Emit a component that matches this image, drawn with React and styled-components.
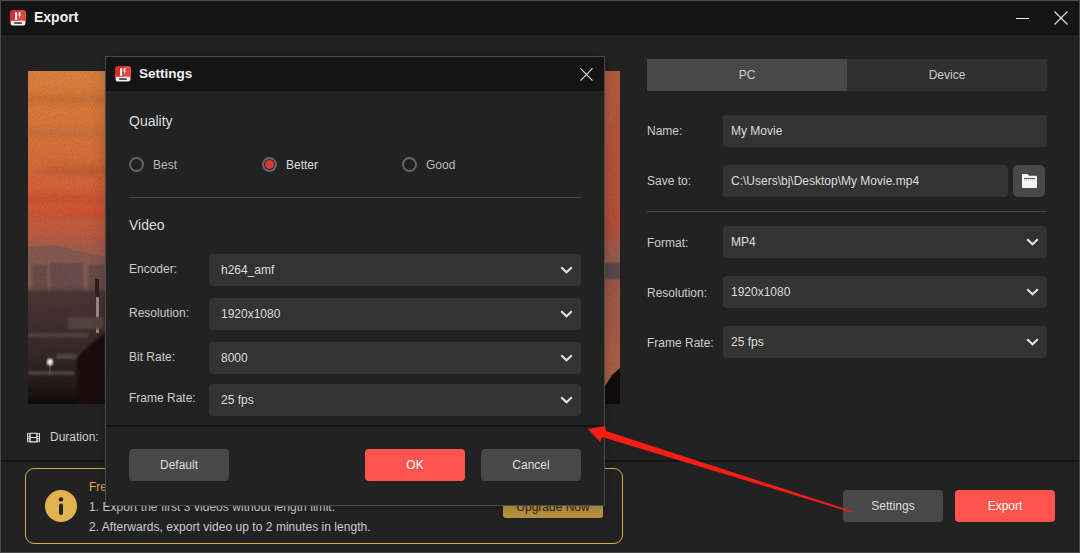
import styled, { createGlobalStyle } from "styled-components";
import { FaFilm } from "react-icons/fa";

const GlobalStyle = createGlobalStyle`
  html, body {
    margin: 0;
    padding: 0;
    background: #222;
  }
  * {
    box-sizing: border-box;
  }
`;

const Logo = () => (
  <LogoSvg viewBox="0 0 16 16">
    <rect x="0" y="0" width="16" height="15" rx="3" fill="#d42f28" />
    <path d="M10 0h3c1.700 0 3 1.300 3 3v8H8z" fill="#e2554a" opacity="0.7" />
    <path d="M5 2.200h2.200v7.600H5z" fill="#fff" />
    <path d="M8.600 2.600l2.300-.8-1 3 .9.300-1.700 3.400.3-2.800-.9-.2z" fill="#fff" />
    <rect x="0.800" y="10.800" width="14.400" height="4.600" rx="1.300" fill="#f4eeee" />
    <rect x="4.200" y="12.200" width="7.600" height="1.700" fill="#4a4444" />
  </LogoSvg>
);

const Chevron = () => (
  <ChevronSvg viewBox="0 0 13 8">
    <path d="M1.200 1.200 6.500 6.300l5.300-5.100" fill="none" stroke="#e4e4e4" strokeWidth="2" />
  </ChevronSvg>
);

const CloseIcon = ({ size }) => (
  <svg width={size} height={size} viewBox="0 0 14 14">
    <path d="M.5.5l13 13M13.500.5l-13 13" stroke="#e6e6e6" strokeWidth="1.100" fill="none" />
  </svg>
);

const FolderIcon = () => (
  <svg width="15" height="14" viewBox="0 0 15 14">
    <path d="M0 1C0 .4.400 0 1 0h4.400L7 1.800h7c.6 0 1 .4 1 1V13c0 .6-.4 1-1 1H1c-.6 0-1-.4-1-1z" fill="#f4f4f4" />
    <path d="M2 4.500h11" stroke="#555" strokeWidth="1" />
    <path d="M2 6h11" stroke="#aaa" strokeWidth="0.800" strokeDasharray="1 1" />
  </svg>
);

const SunsetPicture = () => (
  <PictureSvg viewBox="0 0 592 333" preserveAspectRatio="none">
    <defs>
      <linearGradient id="sky" x1="0" y1="0" x2="0" y2="1">
        <stop offset="0" stopColor="#dc8240" />
        <stop offset="0.2" stopColor="#d9753a" />
        <stop offset="0.38" stopColor="#d6603a" />
        <stop offset="0.48" stopColor="#bb5f48" />
        <stop offset="0.6" stopColor="#8f5c50" />
        <stop offset="1" stopColor="#5b4440" />
      </linearGradient>
      <linearGradient id="ground" x1="0" y1="0" x2="0" y2="1">
        <stop offset="0" stopColor="#6b4e4c" stopOpacity="0" />
        <stop offset="0.06" stopColor="#4c3634" />
        <stop offset="0.55" stopColor="#372a29" />
        <stop offset="0.82" stopColor="#261c1b" />
        <stop offset="1" stopColor="#110c0b" />
      </linearGradient>
      <linearGradient id="edgeStrip" x1="0" y1="0" x2="0" y2="1">
        <stop offset="0" stopColor="#b5603f" />
        <stop offset="0.45" stopColor="#bb503a" />
        <stop offset="0.57" stopColor="#966050" />
        <stop offset="0.58" stopColor="#5e4a4a" />
        <stop offset="0.62" stopColor="#5e4a4a" />
        <stop offset="0.63" stopColor="#a05a48" />
        <stop offset="1" stopColor="#b46446" />
      </linearGradient>
      <filter id="blur3"><feGaussianBlur stdDeviation="3" /></filter>
      <filter id="blur1"><feGaussianBlur stdDeviation="0.800" /></filter>
      <filter id="grain">
        <feTurbulence type="fractalNoise" baseFrequency="0.9" numOctaves="2" seed="4" />
        <feColorMatrix values="0 0 0 0 0 0 0 0 0 0 0 0 0 0 0 0 0 0 1.600 -0.600" />
      </filter>
    </defs>
    <rect width="592" height="333" fill="url(#sky)" />
    <g filter="url(#blur3)" opacity="0.65">
      <ellipse cx="40" cy="28" rx="70" ry="5" fill="#c06a38" />
      <ellipse cx="30" cy="62" rx="60" ry="4" fill="#bf6c40" />
      <ellipse cx="60" cy="100" rx="50" ry="5" fill="#b85a34" />
      <ellipse cx="20" cy="128" rx="70" ry="4" fill="#c2482c" />
      <ellipse cx="60" cy="142" rx="60" ry="5" fill="#d84a2c" />
      <ellipse cx="30" cy="160" rx="80" ry="4" fill="#c85a3c" />
    </g>
    <path d="M0 176 28 174 50 180 78 186V240H0z" fill="#875a50" />
    <g fill="#6b4e4c" filter="url(#blur1)">
      <rect x="4" y="194" width="15" height="30" />
      <rect x="22" y="192" width="33" height="32" />
      <rect x="60" y="194" width="17" height="30" />
    </g>
    <rect y="214" width="78" height="119" fill="url(#ground)" />
    <rect x="68" y="226" width="3" height="36" fill="#a08c88" />
    <rect x="67" y="208" width="4" height="18" fill="#2a2224" />
    <g fill="#54443f" filter="url(#blur1)">
      <rect x="40" y="246" width="36" height="12" />
      <rect x="0" y="262" width="60" height="4" />
      <rect x="28" y="283" width="24" height="5" />
      <rect x="0" y="300" width="46" height="4" />
    </g>
    <path d="M49 333V286L62 274 77 262V333z" fill="#1a1110" filter="url(#blur1)" />
    <rect x="21.500" y="291" width="1" height="12" fill="#6e605c" />
    <ellipse cx="22" cy="291" rx="3" ry="3.500" fill="#f4f4f4" filter="url(#blur1)" />
    <rect x="577" width="15" height="333" fill="url(#edgeStrip)" />
    <path d="M577 333V315L584 304 592 297V333z" fill="#130e0d" />
    <rect width="592" height="333" filter="url(#grain)" opacity="0.16" />
  </PictureSvg>
);

const SelectField = ({ value, $wide }) => (
  <Select $wide={$wide}>
    <span>{value}</span>
    <Chevron />
  </Select>
);

export default function App() {
  return (
    <>
      <GlobalStyle />
      <Window>
        <TitleBar>
          <TitleLeft>
            <Logo />
            <WindowTitle>Export</WindowTitle>
          </TitleLeft>
          <WindowControls>
            <MinimizeBar />
            <CloseIcon size={14} />
          </WindowControls>
        </TitleBar>

        <Main>
          <PreviewColumn>
            <SunsetPicture />
            <DurationRow>
              <FaFilm size={13} color="#eee" />
              <span>Duration:</span>
            </DurationRow>
          </PreviewColumn>

          <SidePanel>
            <Tabs>
              <Tab $active>PC</Tab>
              <Tab>Device</Tab>
            </Tabs>
            <FormRow>
              <FieldLabel>Name:</FieldLabel>
              <TextField>My Movie</TextField>
            </FormRow>
            <FormRow>
              <FieldLabel>Save to:</FieldLabel>
              <TextField>C:\Users\bj\Desktop\My Movie.mp4</TextField>
              <FolderButton>
                <FolderIcon />
              </FolderButton>
            </FormRow>
            <PanelDivider />
            <FormRow $first>
              <FieldLabel $low>Format:</FieldLabel>
              <SelectField value="MP4" />
            </FormRow>
            <FormRow>
              <FieldLabel $low>Resolution:</FieldLabel>
              <SelectField value="1920x1080" />
            </FormRow>
            <FormRow>
              <FieldLabel $low>Frame Rate:</FieldLabel>
              <SelectField value="25 fps" />
            </FormRow>
          </SidePanel>
        </Main>

        <Footer>
          <Notice>
            <InfoBadge>
              <svg width="6" height="18" viewBox="0 0 6 18">
                <circle cx="3" cy="2.400" r="2.200" fill="#222" />
                <rect x="1" y="6.500" width="4" height="11.500" rx="2" fill="#222" />
              </svg>
            </InfoBadge>
            <NoticeText>
              <NoticeTitle>Free</NoticeTitle>
              <NoticeLine>1. Export the first 3 videos without length limit.</NoticeLine>
              <NoticeLine>2. Afterwards, export video up to 2 minutes in length.</NoticeLine>
            </NoticeText>
            <UpgradeButton>Upgrade Now</UpgradeButton>
          </Notice>
          <FooterActions>
            <Button>Settings</Button>
            <Button $primary>Export</Button>
          </FooterActions>
        </Footer>

        <Modal>
          <ModalTitleBar>
            <TitleLeft>
              <Logo />
              <ModalTitle>Settings</ModalTitle>
            </TitleLeft>
            <CloseIcon size={13} />
          </ModalTitleBar>
          <ModalBody>
            <SectionHeading>Quality</SectionHeading>
            <RadioRow>
              <RadioItem $width={133}>
                <RadioDot />
                <RadioLabel>Best</RadioLabel>
              </RadioItem>
              <RadioItem $width={140}>
                <RadioDot $checked />
                <RadioLabel $checked>Better</RadioLabel>
              </RadioItem>
              <RadioItem>
                <RadioDot />
                <RadioLabel>Good</RadioLabel>
              </RadioItem>
            </RadioRow>
            <ModalDivider />
            <VideoHeading>Video</VideoHeading>
            <ModalRows>
              <ModalRow>
                <ModalLabel>Encoder:</ModalLabel>
                <SelectField value="h264_amf" $wide />
              </ModalRow>
              <ModalRow>
                <ModalLabel>Resolution:</ModalLabel>
                <SelectField value="1920x1080" $wide />
              </ModalRow>
              <ModalRow>
                <ModalLabel>Bit Rate:</ModalLabel>
                <SelectField value="8000" $wide />
              </ModalRow>
              <ModalRow $tight>
                <ModalLabel $high>Frame Rate:</ModalLabel>
                <SelectField value="25 fps" $wide />
              </ModalRow>
            </ModalRows>
          </ModalBody>
          <ModalFooter>
            <Button>Default</Button>
            <ModalFooterRight>
              <Button $primary>OK</Button>
              <Button>Cancel</Button>
            </ModalFooterRight>
          </ModalFooter>
        </Modal>

        <ArrowOverlay viewBox="0 0 1080 553">
          <polygon points="588,429 605,426 606,431 852,511 852,512.500 602,437 600,442" fill="#fb1c14" />
        </ArrowOverlay>
      </Window>
    </>
  );
}

const Window = styled.div`
  position: relative;
  display: flex;
  flex-direction: column;
  width: 1080px;
  height: 553px;
  overflow: hidden;
  background: #222;
  border: 1px solid #4a4a4a;
  font-family: "Liberation Sans", Arial, sans-serif;
  font-size: 12px;
  color: #ddd;
`;

const TitleBar = styled.div`
  display: flex;
  align-items: center;
  justify-content: space-between;
  flex: none;
  height: 34px;
  padding: 0 10px 0 9px;
  background: #141414;
`;

const TitleLeft = styled.div`
  display: flex;
  align-items: center;
  gap: 8px;
`;

const LogoSvg = styled.svg`
  width: 16px;
  height: 16px;
  flex: none;
`;

const WindowTitle = styled.div`
  margin-top: -2px;
  font-size: 14px;
  font-weight: 700;
  color: #f2f2f2;
`;

const WindowControls = styled.div`
  display: flex;
  align-items: center;
  gap: 25px;
  padding-right: 1px;
`;

const MinimizeBar = styled.div`
  width: 13px;
  height: 1px;
  background: #eee;
`;

const Main = styled.div`
  display: flex;
  flex: 1;
  align-items: flex-start;
  gap: 27px;
  padding-left: 27px;
`;

const PreviewColumn = styled.div`
  display: flex;
  flex-direction: column;
  width: 592px;
  padding-top: 36px;
`;

const PictureSvg = styled.svg`
  display: block;
  width: 592px;
  height: 333px;
`;

const DurationRow = styled.div`
  display: flex;
  align-items: center;
  gap: 10px;
  margin: 26px 0 0 -1px;
  line-height: 14px;
  color: #ccc;
`;

const SidePanel = styled.div`
  display: flex;
  flex-direction: column;
  width: 400px;
  padding-top: 24px;
`;

const Tabs = styled.div`
  display: flex;
  margin-bottom: 6px;
`;

const Tab = styled.div`
  display: flex;
  align-items: center;
  justify-content: center;
  width: 200px;
  height: 32px;
  background: ${(p) => (p.$active ? "#484848" : "#303030")};
  color: #ccc;
`;

const FormRow = styled.div`
  display: flex;
  align-items: center;
  height: 32px;
  margin-top: ${(p) => (p.$first ? "14px" : "18px")};
`;

const FieldLabel = styled.div`
  flex: none;
  width: 76px;
  padding-top: ${(p) => (p.$low ? "1px" : "0")};
  color: #ccc;
`;

const TextField = styled.div`
  display: flex;
  align-items: center;
  flex: 1;
  height: 32px;
  padding: 0 8px;
  border-radius: 4px;
  background: #333;
  color: #ddd;
`;

const FolderButton = styled.div`
  display: flex;
  align-items: center;
  justify-content: center;
  flex: none;
  width: 32px;
  height: 32px;
  margin: 0 2px 0 5px;
  border-radius: 5px;
  background: #484848;
`;

const PanelDivider = styled.div`
  height: 1px;
  margin-top: 14px;
  background: #484848;
`;

const Select = styled.div`
  display: flex;
  align-items: center;
  justify-content: space-between;
  flex: 1;
  height: 32px;
  padding: 0 8px 0 ${(p) => (p.$wide ? "12px" : "8px")};
  border-radius: 4px;
  background: #333;
  color: #ddd;
`;

const ChevronSvg = styled.svg`
  width: 13px;
  height: 8px;
  flex: none;
`;

const Footer = styled.div`
  display: flex;
  align-items: flex-start;
  justify-content: space-between;
  flex: none;
  height: 92px;
  padding: 6px 24px 0;
  border-top: 2px solid #141414;
`;

const Notice = styled.div`
  display: flex;
  align-items: center;
  width: 598px;
  height: 76px;
  padding: 0 19px;
  border: 1px solid #dcaa4a;
  border-radius: 9px;
`;

const InfoBadge = styled.div`
  display: flex;
  align-items: center;
  justify-content: center;
  flex: none;
  width: 32px;
  height: 32px;
  border-radius: 50%;
  background: #e2b24f;
`;

const NoticeText = styled.div`
  display: flex;
  flex-direction: column;
  flex: 1;
  gap: 6px;
  padding: 2px 0 0 12px;
`;

const NoticeTitle = styled.div`
  color: #e0a94a;
  line-height: 14px;
`;

const NoticeLine = styled.div`
  color: #ccc;
  line-height: 14px;
  letter-spacing: 0.04px;
`;

const UpgradeButton = styled.div`
  display: flex;
  align-items: center;
  justify-content: center;
  flex: none;
  width: 100px;
  height: 22px;
  margin-top: 2px;
  border-radius: 3px;
  background: #b8923f;
  color: #2a2418;
`;

const FooterActions = styled.div`
  display: flex;
  gap: 12px;
  margin-top: 22px;
`;

const Button = styled.div`
  display: flex;
  align-items: center;
  justify-content: center;
  width: 100px;
  height: 32px;
  border-radius: 4px;
  background: ${(p) => (p.$primary ? "#ff534d" : "#484848")};
  color: ${(p) => (p.$primary ? "#fff" : "#ddd")};
`;

const Modal = styled.div`
  position: absolute;
  top: 55px;
  left: 104px;
  display: flex;
  flex-direction: column;
  width: 500px;
  height: 450px;
  background: #222;
  border: 1px solid #4a4a4a;
  box-shadow: 0 0 14px rgba(0, 0, 0, 0.22);
`;

const ModalTitleBar = styled.div`
  display: flex;
  align-items: center;
  justify-content: space-between;
  flex: none;
  height: 34px;
  padding: 0 11px 0 9px;
  background: #141414;
`;

const ModalTitle = styled.div`
  margin-top: -2px;
  font-size: 13.5px;
  font-weight: 700;
  color: #f2f2f2;
`;

const ModalBody = styled.div`
  display: flex;
  flex-direction: column;
  padding: 22px 23px 0;
`;

const SectionHeading = styled.div`
  font-size: 14px;
  line-height: 16px;
  color: #ddd;
`;

const VideoHeading = styled(SectionHeading)`
  margin-top: 19px;
`;

const RadioRow = styled.div`
  display: flex;
  margin-top: 27px;
`;

const RadioItem = styled.div`
  display: flex;
  align-items: center;
  gap: 9px;
  width: ${(p) => (p.$width ? `${p.$width}px` : "auto")};
  height: 16px;
`;

const RadioDot = styled.div`
  flex: none;
  width: 15px;
  height: 15px;
  border: 2px solid #666;
  border-radius: 50%;
  background: ${(p) => (p.$checked ? "#d83a30" : "transparent")};
  box-shadow: ${(p) => (p.$checked ? "inset 0 0 0 1px #222" : "none")};
`;

const RadioLabel = styled.div`
  padding-top: 1px;
  color: ${(p) => (p.$checked ? "#ddd" : "#bbb")};
`;

const ModalDivider = styled.div`
  height: 1px;
  margin-top: 25px;
  background: #484848;
`;

const ModalRows = styled.div`
  display: flex;
  flex-direction: column;
  gap: 12px;
  margin-top: 21px;
`;

const ModalRow = styled.div`
  display: flex;
  align-items: center;
  height: 32px;
  margin-top: ${(p) => (p.$tight ? "-2px" : "0")};
`;

const ModalLabel = styled.div`
  flex: none;
  width: 80px;
  margin-top: ${(p) => (p.$high ? "-4px" : "-2px")};
  color: #ccc;
`;

const ModalFooter = styled.div`
  display: flex;
  justify-content: space-between;
  margin-top: 9px;
  padding: 22px 23px 0;
  border-top: 2px solid #141414;
`;

const ModalFooterRight = styled.div`
  display: flex;
  gap: 16px;
`;

const ArrowOverlay = styled.svg`
  position: absolute;
  top: -1px;
  left: -1px;
  width: 1080px;
  height: 553px;
  pointer-events: none;
`;
